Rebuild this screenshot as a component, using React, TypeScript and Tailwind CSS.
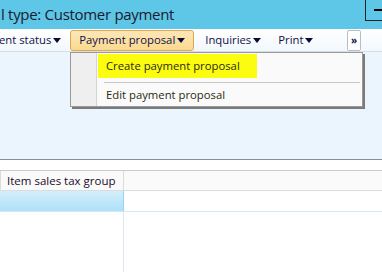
import React from 'react';

const Caret = () => (
    <svg width="8" height="5" viewBox="0 0 8 5" className="ml-[2px] mt-[1px]">
        <path d="M0 0 H8 L4 5 Z" fill="#0b0b3b" />
    </svg>
);

const MenuButton = ({ label, active }: { label: string; active?: boolean }) => (
    <div
        className={
            active
                ? 'flex items-center h-[21px] px-[8px] rounded-[3px] border border-[#e0a84e] bg-gradient-to-b from-[#fde7b8] to-[#fbd98e]'
                : 'flex items-center h-[21px] px-[8px]'
        }
    >
        <span>{label}</span>
        <Caret />
    </div>
);

export default function App() {
    return (
        <div
            className="w-[382px] h-[272px] overflow-hidden bg-white text-[11.3px] text-[#101048]"
            style={{ fontFamily: '"Open Sans", "Noto Sans", sans-serif' }}
        >
            {/* title bar */}
            <div className="h-[29px] bg-[#5ec6e6] flex items-start justify-between">
                <div className="pl-[1px] pt-[4px] text-[15px] leading-[20px] text-[#1a1a2e] tracking-[-0.3px]">
                    l type: Customer payment
                </div>
                <div className="w-[17px] h-[21px] border-l border-b border-[#222] flex items-center justify-end">
                    <div className="w-[8px] h-[2px] bg-black" />
                </div>
            </div>

            {/* toolbar */}
            <div className="h-[23px] bg-gradient-to-b from-white to-[#f2f8fd] flex items-center border-b border-[#d6dde5]">
                <div className="flex items-center h-[21px] -ml-[1px]">
                    <span>ent status</span>
                    <Caret />
                </div>
                <div className="ml-[9px]">
                    <MenuButton label="Payment proposal" active />
                </div>
                <div className="ml-[3px]">
                    <MenuButton label="Inquiries" />
                </div>
                <div className="ml-[1px]">
                    <MenuButton label="Print" />
                </div>
                <div className="ml-auto mr-[21px] w-[14px] h-[21px] border border-[#b8bec6] rounded-[2px] bg-white flex items-center justify-center text-[10px] font-bold leading-none text-[#101048]">
                    »
                </div>
            </div>

            {/* body */}
            <div className="h-[108px] bg-[#eaf5fe] relative border-b border-[#8a9098]">
                <div className="absolute left-[70px] top-0 w-[293px] h-[55px] bg-[#fafafa] border border-[#9a9a9a] shadow-[2px_2px_0_#7a7a7a] flex">
                    <div className="w-[26px] bg-[#efefef] border-r border-[#d4d4d4]" />
                    <div className="flex-1 pl-[1px] pt-[1px] pr-[2px]">
                        <div className="w-[159px] h-[24px] bg-[#fcfc10] flex items-center pl-[8px] text-[#2a2a10]">
                            Create payment proposal
                        </div>
                        <div className="mt-[4px] ml-[6px] h-px bg-[#c8c8c8]" />
                        <div className="h-[24px] flex items-center pl-[8px] text-[#2a2a10]">
                            Edit payment proposal
                        </div>
                    </div>
                </div>
            </div>

            {/* grid */}
            <div className="h-[11px] bg-white border-b border-[#c4ccd6]" />
            <div className="flex h-[20px] bg-[#fafafa] border-b border-[#dcdcdc]">
                <div className="w-[124px] border-r border-l border-[#dcdcdc] flex items-center pl-[6px] text-[11.5px] text-[#1a0a2a]">
                    Item sales tax group
                </div>
            </div>
            <div className="flex h-[21px] border-b border-[#d8e8f4]">
                <div className="w-[124px] bg-gradient-to-b from-[#d4eefb] to-[#ade0f8] border-r border-[#8fd4fa]" />
            </div>
            <div className="flex h-[60px]">
                <div className="w-[124px] border-r border-[#dce8f3]" />
            </div>
        </div>
    );
}
